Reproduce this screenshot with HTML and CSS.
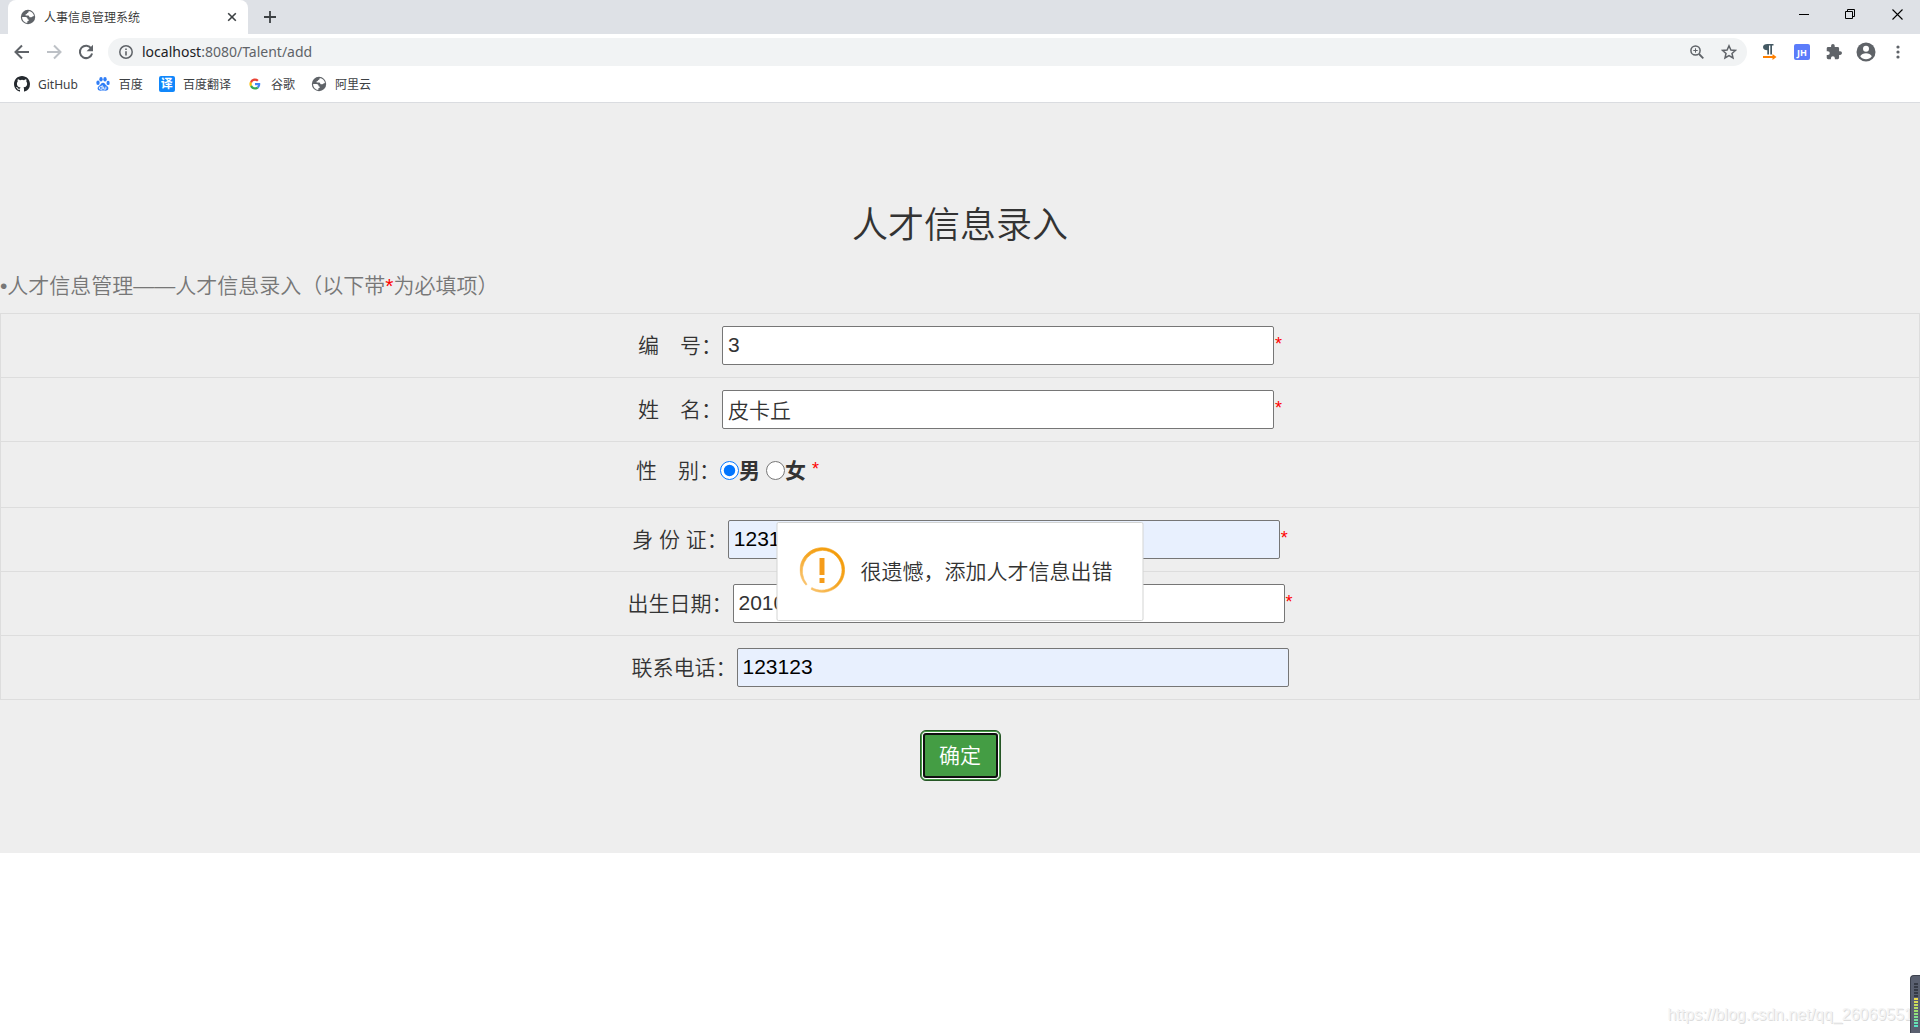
FILE: index.html
```html
<!DOCTYPE html>
<html lang="zh-CN">
<head>
<meta charset="utf-8">
<title>人事信息管理系统</title>
<link rel="stylesheet" href="styles.css">
</head>
<body>
<svg class="defs" width="0" height="0" aria-hidden="true">
  <symbol id="globe" viewBox="0 0 16 16">
    <circle cx="8" cy="8" r="7.2" fill="#5f6368"/>
    <path d="M8.500 2c.6 1-.2 1.700-1.200 1.900-.3.900-.9 1.200-1.700 1.300v1.300h2.700c.8.300 1 1.100 1.300 1.700h1.900c.9-.5 1.300-1.100 2.500-1.200C13.500 4.200 11.300 2.100 8.500 2zM2.100 8h3.400c1.600 0 2.100 1 2.100 2.200 1 .1 1.600.5 1.200 1.300-.4.500-1.300.5-1.500 1.100v1.300C4.500 13.800 2.100 11.300 2.100 8z" fill="#fff"/>
  </symbol>
</svg>

<header class="browser">
  <div class="tabstrip">
    <div class="tab">
      <svg class="i16"><use href="#globe"/></svg>
      <span class="tab-title">人事信息管理系统</span>
      <button class="bare" aria-label="关闭标签页"><svg width="10" height="10" viewBox="0 0 10 10"><path d="M1.200 1.200l7.600 7.600M8.800 1.200L1.200 8.800" stroke="#3c4043" stroke-width="1.600"/></svg></button>
    </div>
    <button class="bare new-tab" aria-label="新标签页"><svg width="12" height="12" viewBox="0 0 12 12"><path d="M6 0v12M0 6h12" stroke="#3c4043" stroke-width="1.800"/></svg></button>
    <div class="window-buttons">
      <button class="bare" aria-label="最小化"><svg width="10" height="11"><path d="M0 5.500h10" stroke="#000"/></svg></button>
      <button class="bare" aria-label="还原"><svg width="11" height="11"><path d="M.5 2.500h7v7h-7zM2.500 2.500v-2h7v7h-2" fill="none" stroke="#000"/></svg></button>
      <button class="bare" aria-label="关闭"><svg width="11" height="11"><path d="M.5.5l10 10M10.500.5l-10 10" stroke="#000" stroke-width="1.100"/></svg></button>
    </div>
  </div>

  <div class="toolbar">
    <div class="nav">
      <button class="bare" aria-label="后退"><svg width="16" height="16" viewBox="0 0 16 16"><path d="M15 8H2M8 1.500L1.500 8 8 14.500" fill="none" stroke="#5f6368" stroke-width="2"/></svg></button>
      <button class="bare" aria-label="前进"><svg width="16" height="16" viewBox="0 0 16 16"><path d="M1 8h13M8 1.500L14.500 8 8 14.500" fill="none" stroke="#bdc1c6" stroke-width="2"/></svg></button>
      <button class="bare" aria-label="刷新"><svg width="16" height="16" viewBox="0 0 16 16"><path d="M13.300 4.500A6.200 6.200 0 1 0 14.100 9.500" fill="none" stroke="#5f6368" stroke-width="2"/><path d="M15 .8v6.400H8.600z" fill="#5f6368"/></svg></button>
    </div>
    <div class="omnibox">
      <svg width="14" height="14" viewBox="0 0 14 14"><circle cx="7" cy="7" r="6.200" fill="none" stroke="#5f6368" stroke-width="1.500"/><path d="M7 6.200v4.300M7 3.400v1.600" stroke="#5f6368" stroke-width="1.600"/></svg>
      <div class="url" role="textbox" contenteditable="true" spellcheck="false" aria-label="地址"><span class="host">localhost</span>:8080/Talent/add</div>
      <button class="bare" aria-label="缩放"><svg width="14" height="14" viewBox="0 0 14 14"><circle cx="5.500" cy="5.500" r="4.600" fill="none" stroke="#5f6368" stroke-width="1.500"/><path d="M9 9l4.300 4.300" stroke="#5f6368" stroke-width="1.800"/><path d="M5.500 3.300v4.400M3.300 5.500h4.400" stroke="#5f6368"/></svg></button>
      <button class="bare" aria-label="添加书签"><svg width="16" height="16" viewBox="0 0 16 16"><path d="M8 1.800l1.900 4.200 4.600.4L11 9.500l1 4.500-4-2.400L4 14l1-4.500L1.500 6.400 6.100 6z" fill="none" stroke="#5f6368" stroke-width="1.500"/></svg></button>
    </div>
    <div class="extensions">
      <button class="bare" aria-label="段落扩展"><svg width="16" height="16" viewBox="0 0 16 16"><path d="M11.500 0v1.400H10V10.500H8.300V1.400H7V10.500H5.300V6.200C2.900 6.200 1 5.300 1 3.100S2.900 0 5.300 0z" fill="#455a64"/><path d="M1 12h9.500V10l4 3-4 3v-2H1z" fill="#ff8000"/></svg></button>
      <button class="bare jh" aria-label="JH 扩展">JH</button>
      <button class="bare" aria-label="扩展程序"><svg width="16" height="16" viewBox="1 1 22 22"><path d="M20.500 11H19V7a2 2 0 0 0-2-2h-4V3.500a2.500 2.500 0 0 0-5 0V5H4a2 2 0 0 0-2 2v3.800h1.500a2.700 2.700 0 0 1 0 5.400H2V20a2 2 0 0 0 2 2h3.800v-1.500a2.700 2.700 0 0 1 5.400 0V22H17a2 2 0 0 0 2-2v-4h1.500a2.500 2.500 0 0 0 0-5z" fill="#5f6368"/></svg></button>
      <button class="bare" aria-label="用户"><svg width="20" height="20" viewBox="0 0 20 20"><circle cx="10" cy="10" r="9.500" fill="#5f6368"/><circle cx="10" cy="6.800" r="3" fill="#fff"/><path d="M4.200 14.200c1-2 3.300-3 5.800-3s4.800 1 5.800 3a7 7 0 0 1-11.600 0z" fill="#fff"/></svg></button>
      <button class="bare" aria-label="菜单"><svg width="4" height="14" viewBox="0 0 4 14"><g fill="#5f6368"><circle cx="2" cy="2" r="1.600"/><circle cx="2" cy="7" r="1.600"/><circle cx="2" cy="12" r="1.600"/></g></svg></button>
    </div>
  </div>

  <nav class="bookmarks">
    <a href="#"><svg class="i16" viewBox="0 0 16 16"><path fill="#24292e" d="M8 0C3.580 0 0 3.580 0 8c0 3.540 2.290 6.530 5.470 7.590.4.070.55-.17.55-.38 0-.19-.01-.82-.01-1.490-2.010.37-2.530-.49-2.690-.94-.09-.23-.48-.94-.82-1.130-.28-.15-.68-.52-.01-.53.63-.01 1.080.58 1.230.82.72 1.210 1.870.87 2.330.66.07-.52.28-.87.51-1.070-1.780-.2-3.640-.89-3.640-3.950 0-.87.31-1.590.82-2.150-.08-.2-.36-1.020.08-2.120 0 0 .67-.21 2.200.82a7.600 7.600 0 0 1 4 0c1.530-1.040 2.200-.82 2.200-.82.44 1.100.16 1.920.08 2.120.51.56.82 1.270.82 2.150 0 3.070-1.870 3.750-3.650 3.950.29.25.54.73.54 1.480 0 1.070-.01 1.930-.01 2.200 0 .21.15.46.55.38A8 8 0 0 0 16 8c0-4.420-3.580-8-8-8z"/></svg><span>GitHub</span></a>
    <a href="#"><svg class="i16" viewBox="0 0 16 16"><g fill="#2f7df6"><ellipse cx="3" cy="6.800" rx="1.700" ry="2.200"/><ellipse cx="6" cy="3.300" rx="1.700" ry="2.300"/><ellipse cx="10" cy="3.300" rx="1.700" ry="2.300"/><ellipse cx="13.100" cy="6.900" rx="1.600" ry="2.200"/><path d="M8 6.800c-1.800 0-2.200 1.700-3.500 2.800C2.600 11 2.300 12 2.800 13.300c.8 2 3 1.200 5.200 1.200s4.400.8 5.200-1.200c.5-1.300.1-2.400-1.700-3.700C10.200 8.500 9.800 6.800 8 6.800z"/></g><path d="M7.200 9.200v4H5.500a1.200 1.200 0 0 1 0-2.500h1.700M8.700 10.600v2.500h2.200v-2.500" fill="none" stroke="#fff" stroke-width=".9"/></svg><span>百度</span></a>
    <a href="#"><span class="yi">译</span><span>百度翻译</span></a>
    <a href="#"><svg class="i16 google" viewBox="0 0 48 48"><path fill="#4285f4" d="M44.500 20H24v8.500h11.800c-.6 3-2.300 5.200-4.700 6.800l7.200 5.600c4.300-4 6.700-9.700 6.700-16.500 0-1.500-.1-3-.5-4.400z"/><path fill="#34a853" d="M24 46c5.900 0 10.900-1.900 14.500-5.300l-7.200-5.500A13.300 13.300 0 0 1 11.500 28.300L4.200 34A22 22 0 0 0 24 46z"/><path fill="#fbbc05" d="M11.500 28.300a13 13 0 0 1 0-8.500L4.200 14a22 22 0 0 0 0 20z"/><path fill="#ea4335" d="M24 10.800c3.200 0 6.100 1.100 8.400 3.300l6.300-6.300A22 22 0 0 0 4.200 14l7.300 5.700A13 13 0 0 1 24 10.800z"/></svg><span>谷歌</span></a>
    <a href="#"><svg class="i16"><use href="#globe"/></svg><span>阿里云</span></a>
  </nav>
</header>

<main class="page">
  <div class="panel">
    <h1>人才信息录入</h1>
    <p class="crumb">•人才信息管理——人才信息录入（以下带<span class="req">*</span>为必填项）</p>
    <form>
      <div class="row"><label for="no">编　号：</label><input class="field" id="no" type="text" value="3"><span class="req">*</span></div>
      <div class="row"><label for="name">姓　名：</label><input class="field" id="name" type="text" value="皮卡丘"><span class="req">*</span></div>
      <div class="row gender">
        <span>性　别：</span>
        <div class="choices" role="radiogroup" aria-label="性别">
          <label><input type="radio" name="sex" checked>男</label>
          <label><input type="radio" name="sex">女</label>
          <span class="req">*</span>
        </div>
      </div>
      <div class="row"><label for="idcard">身 份 证：</label><input class="field filled" id="idcard" type="text" value="1231"><span class="req">*</span></div>
      <div class="row"><label for="birth">出生日期：</label><input class="field" id="birth" type="text" value="2010"><span class="req">*</span></div>
      <div class="row"><label for="phone">联系电话：</label><input class="field filled" id="phone" type="text" value="123123"></div>
      <button class="submit" type="submit">确定</button>
    </form>
  </div>

  <div class="toast" role="alert">
    <svg width="46" height="46" viewBox="0 0 46 46">
      <defs><linearGradient id="ring" x1="0" y1="1" x2="1" y2="0"><stop offset="0" stop-color="#fbcf8b"/><stop offset=".5" stop-color="#f5a623"/><stop offset="1" stop-color="#f39800"/></linearGradient></defs>
      <path d="M11.500 42.200A22.300 22.300 0 1 0 6.500 38.200L7.500 37.200A20.800 20.800 0 0 1 23 3.300 19.700 19.700 0 0 1 42.500 23 20.300 20.300 0 0 1 12.300 40.600z" fill="url(#ring)" stroke="url(#ring)" stroke-width=".6"/>
      <path d="M20 11h5v17h-5zM20 31h5v5h-5z" fill="#f59c1a"/>
    </svg>
    <span>很遗憾，添加人才信息出错</span>
  </div>

  <div class="watermark">https://blog.csdn.net/qq_26069551</div>
  <div class="meter"></div>
</main>
</body>
</html>
```
FILE: styles.css
```css
* { box-sizing: border-box; }

body {
  margin: 0;
  min-height: 100vh;
  display: flex;
  flex-direction: column;
  background: #fff;
  color: #333;
  font-family: "Liberation Sans", "Noto Sans CJK SC", sans-serif;
  font-weight: 350;
}

.defs { position: absolute; }
svg { display: block; flex: none; }
.i16 { width: 16px; height: 16px; }

.bare {
  display: flex;
  align-items: center;
  justify-content: center;
  padding: 0;
  border: 0;
  background: none;
}

/* browser window */
.browser {
  border-bottom: 1px solid #dadce0;
  font-family: "Noto Sans", "Noto Sans CJK SC", sans-serif;
  font-size: 12px;
  font-weight: 400;
}

.tabstrip {
  display: flex;
  align-items: center;
  height: 34px;
  padding: 0 17px 0 8px;
  background: #dee1e6;
}

.tab {
  display: flex;
  align-items: center;
  gap: 8px;
  width: 240px;
  height: 34px;
  padding: 0 11px 0 12px;
  border-radius: 8px 8px 0 0;
  background: #fff;
}
.tab-title { flex: 1; font-weight: 350; }
.new-tab { margin-left: 16px; }

.window-buttons {
  display: flex;
  gap: 36px;
  margin-left: auto;
  padding-bottom: 6px;
}

.toolbar {
  display: flex;
  align-items: center;
  height: 36px;
  padding: 0 20px 0 14px;
}
.nav { display: flex; gap: 16px; }

.omnibox {
  display: flex;
  flex: 1;
  align-items: center;
  gap: 17px;
  height: 28px;
  margin: 0 15px 0 14px;
  padding: 0 10px 0 11px;
  border-radius: 14px;
  background: #f1f3f4;
}
.url {
  flex: 1;
  margin-left: -8px;
  color: #5f6368;
  font-size: 14px;
  line-height: 20px;
  outline: 0;
}
.host { color: #202124; }

.extensions { display: flex; align-items: center; gap: 16px; }
.extensions .bare:nth-child(3) { margin-right: -2px; }
.extensions .bare:last-child { margin-left: 4px; }
.jh {
  width: 16px;
  height: 16px;
  border-radius: 2px;
  background: #5b7cfa;
  color: #fff;
  font: 700 9px "Open Sans", sans-serif;
}

.bookmarks {
  display: flex;
  align-items: center;
  gap: 16px;
  height: 32px;
  padding: 0 14px 4px;
}
.bookmarks a {
  display: flex;
  align-items: center;
  gap: 8px;
  color: #3c4043;
  text-decoration: none;
}
.bookmarks a:first-child { padding-right: 1px; }
.google { padding: 2px; }
.yi {
  width: 16px;
  height: 16px;
  border-radius: 2px;
  background: #1187fb;
  color: #fff;
  font-weight: 700;
  line-height: 15px;
  text-align: center;
}

/* page */
.page { position: relative; flex: 1; overflow: hidden; }

.panel {
  padding: 101px 0 72px;
  background: #eee;
  font-size: 21px;
}

h1 {
  margin: 0;
  font-size: 36px;
  font-weight: 350;
  line-height: 44px;
  text-align: center;
}

.crumb {
  margin: 23px 0 12px;
  color: #777;
  line-height: 30px;
}

.req { color: #f00; }
.crumb .req { font-size: 21px; }

form { border-top: 1px solid #ddd; }

.row {
  display: flex;
  align-items: center;
  justify-content: center;
  height: 64px;
  border: 1px solid #ddd;
  border-top: 0;
}
.row > label, .gender > span { padding-bottom: 3px; }
.row .req { width: 8px; padding-bottom: 2px; font-size: 18px; }
.row .field + .req { padding-left: 1px; }
.gender { height: 66px; padding-bottom: 8px; }

.field {
  width: 552px;
  height: 39px;
  padding: 0 5px 2px;
  border: 1px solid #767676;
  border-radius: 2px;
  background: #fff;
  color: #333;
  font: inherit;
}
.filled { background: #e8f0fe; color: #000; }

.choices { display: flex; align-items: center; gap: 6px; width: 564px; }
.choices label { display: flex; align-items: center; line-height: 24px; font-weight: 700; }
.choices input { width: 19px; height: 19px; margin: 0; }

.submit {
  display: block;
  width: 81px;
  height: 51px;
  margin: 30px auto 0;
  padding: 0 0 4px;
  border: 1px solid #255625;
  border-radius: 6px;
  background: #449d44;
  box-shadow: inset 0 0 0 1px #449d44, inset 0 0 0 2px #fff, inset 0 0 0 4px #101010;
  color: #fff;
  font: inherit;
}

.toast {
  position: absolute;
  top: 419px;
  left: 50%;
  display: flex;
  align-items: center;
  gap: 15px;
  height: 99px;
  padding: 0 30px 3px 22px;
  border: 1px solid #d3d4d3;
  border-radius: 2px;
  background: #fff;
  font-size: 21px;
  white-space: nowrap;
  transform: translateX(-50%);
}

.watermark {
  position: absolute;
  right: 7px;
  bottom: 8px;
  color: #f4f4f4;
  text-shadow: 1px 1px 0 #ddd;
  font-size: 16px;
  font-weight: 400;
  line-height: 20px;
}

.meter {
  position: absolute;
  right: 0;
  bottom: 0;
  width: 10px;
  height: 58px;
  border: 1px solid #3d424e;
  border-width: 1px 0 0 1px;
  border-radius: 4px 0 0 0;
  background:
    repeating-linear-gradient(#5a6070 0 1px, transparent 1px 3px) 3px 6px / 4px 46px no-repeat,
    linear-gradient(#363b46 0 16px, #f2d94a 16px, #9be070 30px, #4fe3d0 46px) 3px 6px / 4px 46px no-repeat,
    #5a6070;
}
```
